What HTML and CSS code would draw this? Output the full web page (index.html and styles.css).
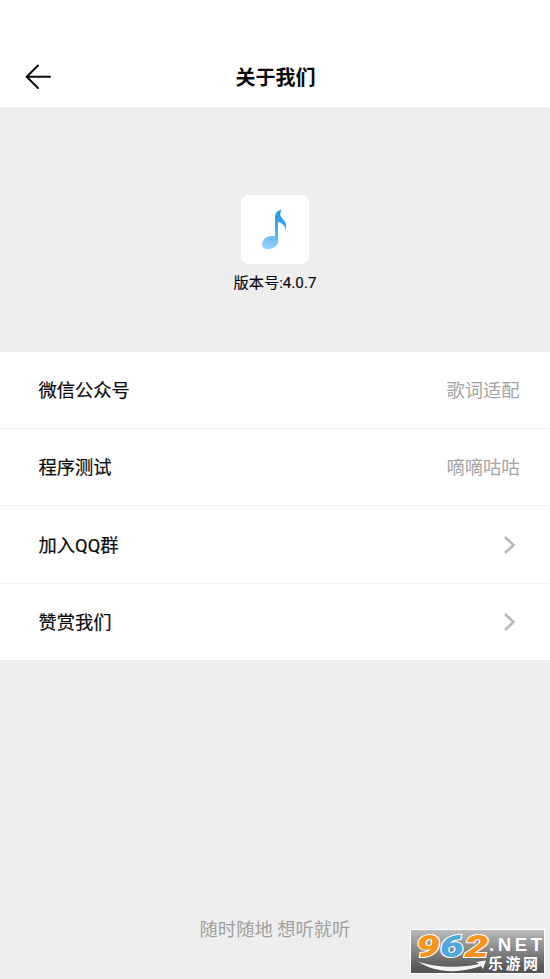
FILE: index.html
```
<!DOCTYPE html>
<html lang="zh-CN">
<head>
<meta charset="utf-8">
<title>关于我们</title>
<link rel="stylesheet" href="styles.css">
</head>
<body>
<header class="bar">
  <svg class="back" width="28" height="28" viewBox="0 0 28 28"><path d="M14 2.5 2.7 13.8 14 25M3 13.8h23"/></svg>
  <h1>关于我们</h1>
</header>
<section class="hero">
  <div class="logo">
    <svg width="68" height="69" viewBox="0 0 68 69">
      <defs><linearGradient id="note" x1="0.6" y1="0" x2="0.3" y2="1"><stop offset="0" stop-color="#2299e6"/><stop offset=".5" stop-color="#4db0ef"/><stop offset="1" stop-color="#96d0fb"/></linearGradient></defs>
      <path fill="url(#note)" d="M40.5 15C36 15.5 34 18.5 34 22V41.5C30 39.8 21 42 21 49.5C21 53 24.5 54.5 28 54C34 53.3 37 50 37 46V27C42 28.5 44.5 31 44.6 36C46.5 29 44 26 41.5 23.5C39 21 38.5 18.5 40.5 15Z"/>
    </svg>
  </div>
  <p class="version">版本号:4.0.7</p>
</section>
<main class="list">
  <div class="row"><span>微信公众号</span><span class="value">歌词适配</span></div>
  <div class="row"><span>程序测试</span><span class="value">嘀嘀咕咕</span></div>
  <div class="row"><span>加入QQ群</span><svg class="chevron" width="14" height="20" viewBox="0 0 14 20"><path d="m2 2 8.5 8L2 18"/></svg></div>
  <div class="row"><span>赞赏我们</span><svg class="chevron" width="14" height="20" viewBox="0 0 14 20"><path d="m2 2 8.5 8L2 18"/></svg></div>
</main>
<footer class="slogan">随时随地 想听就听</footer>
<svg class="badge" width="135" height="45" viewBox="0 0 135 45">
  <defs><linearGradient id="plate" x1="0" y1="0" x2="0" y2="1"><stop offset="0" stop-color="#bcbcbc"/><stop offset=".9" stop-color="#555"/></linearGradient></defs>
  <rect x=".5" y=".5" width="134" height="44" fill="url(#plate)" stroke="#fff"/>
  <path fill="#f4f4f4" d="M8 32.5C25 38.5 50 39.5 69 35L66 33 76 31.5 73 40 71 37C50 44.5 25 44.5 8 32.5Z"/>
  <g class="digits">
    <text transform="translate(6 27.5) scale(1.32 1)">9</text>
    <text class="blue" transform="translate(30 27.5) scale(1.32 1)">6</text>
    <text transform="translate(54.5 27.5) scale(1.32 1)">2</text>
  </g>
  <text class="net" x="79" y="22" textLength="53">.NET</text>
  <text class="site" x="78" y="39.5" textLength="50">乐游网</text>
</svg>
</body>
</html>
```
FILE: styles.css
```
* { box-sizing: border-box; }
body {
  margin: 0;
  height: 979px;
  position: relative;
  overflow: hidden;
  background: #eee;
  color: #0a0a0a;
  font-family: Roboto, "Noto Sans CJK SC", sans-serif;
}
.bar {
  height: 107px;
  padding: 47px 24px 0;
  background: #fff;
  display: grid;
  grid-template-columns: 28px 1fr 28px;
  align-items: center;
}
.back { fill: none; stroke: #0a0a0a; stroke-width: 2; stroke-linecap: round; }
h1 { margin: 0; padding: 2px 0 0 1px; text-align: center; font-size: 20px; line-height: 30px; font-weight: 700; }
.hero {
  height: 245px;
  padding-top: 88px;
  display: flex;
  flex-direction: column;
  align-items: center;
}
.logo { width: 68px; height: 69px; border-radius: 8px; background: #fff; }
.logo svg { display: block; }
.version { margin: 8px 0 0; font-size: 15.2px; line-height: 22px; -webkit-text-stroke: .15px; }
.list {
  background: #fff;
  display: grid;
  grid-template-rows: 76px 77px 78px 77px;
}
.row {
  padding: 1px 30.5px 0 38.5px;
  display: flex;
  align-items: center;
  justify-content: space-between;
  font-size: 18.3px;
  line-height: 28px;
  -webkit-text-stroke: .2px;
}
.row + .row { border-top: 1px solid #f0f0f0; }
.row:nth-child(3) { padding-top: 2px; }
.value { color: #a3a3a3; -webkit-text-stroke: 0; }
.chevron { margin: 0 2.5px 1.5px 0; fill: none; stroke: #b8b8ba; stroke-width: 2.6; }
.slogan { margin-top: 256px; text-align: center; font-size: 18.3px; line-height: 28px; color: #a0a0a0; }
.badge { position: absolute; left: 410px; top: 929px; }
.digits { font: italic 900 32px Roboto, sans-serif; fill: #f7941d; stroke: #fff; stroke-width: 2px; paint-order: stroke; }
.digits .blue { fill: #4fa8dc; }
.net { font: 700 18.5px "Liberation Sans", sans-serif; fill: #fff; }
.site { font: 700 15px/1 "Noto Sans CJK SC", sans-serif; fill: #fff; }
```
